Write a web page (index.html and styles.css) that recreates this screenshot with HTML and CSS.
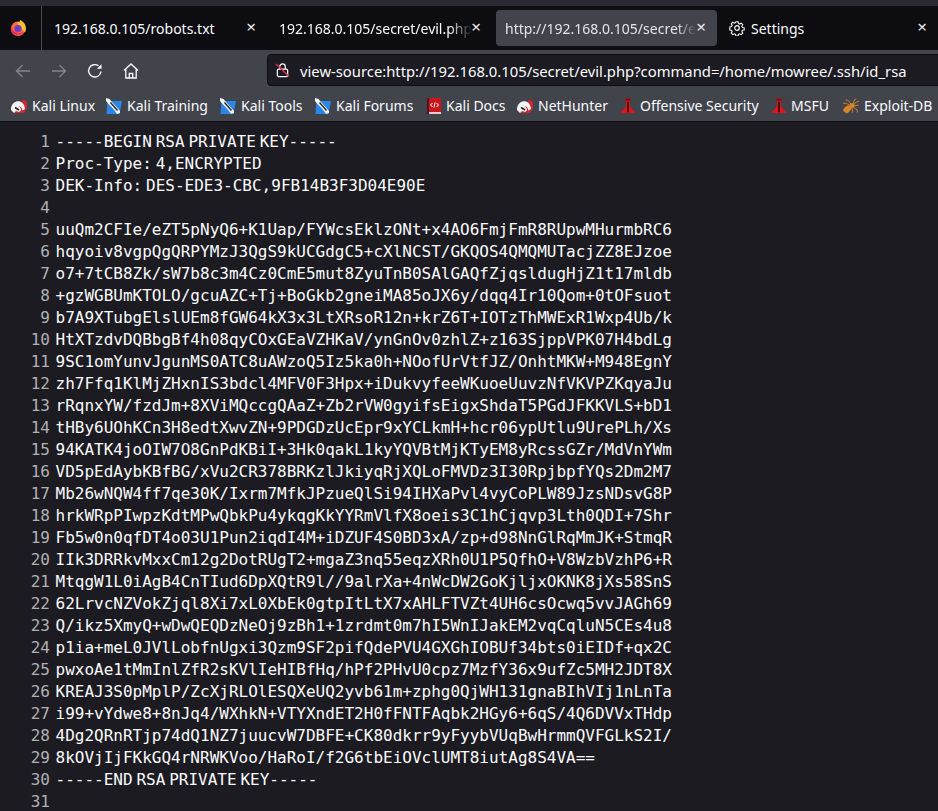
FILE: index.html
```html
<!DOCTYPE html>
<html lang="en">
<head>
<meta charset="utf-8">
<title>view-source</title>
<link rel="stylesheet" href="styles.css">
</head>
<body>
<svg class="defs" width="0" height="0" aria-hidden="true">
  <defs>
    <symbol id="kali-blue" viewBox="0 0 16 16">
      <path d="M1.500 3h14.500L13.500 16H.5z" fill="#2b86ea"/>
      <path d="M0 0l3.500 1 2.500 3 5 5.500 3 3.500v2l-3 1-2-3-3.500-4-3-3L0 3z" fill="#f4f4f4"/>
      <path d="M4.500 4.500l7 8" stroke="#2a2a2a" stroke-width="1.500"/>
    </symbol>
    <symbol id="kali-red" viewBox="0 0 16 16">
      <path d="M1 12L13 1.500l3 2.500v6l-3 5H3z" fill="#cf2530"/>
      <path d="M0 10C1 5 5 2.500 9 3.500c3 .7 5 4.500 5 7.500l-2.500 1.500c-.5-3-2.500-5-5-4.500 2.500 0 3.500 2 3.500 4.500L8 14 5 13l-2 2-3-3z" fill="#f4f4f4"/>
      <path d="M4 9.500l4 2.500" stroke="#222" stroke-width="1.500"/>
    </symbol>
    <symbol id="tower" viewBox="0 0 16 18">
      <path d="M5 0h6v3l-1 1 .5 6L16 15.500V17H0v-1.500L5.500 10 6 4 5 3z" fill="#e0141c"/>
      <path d="M5 0h6v3H5z" fill="#7a1014"/>
      <path d="M7 4h2v12H7z" fill="#3a0c0e"/>
    </symbol>
  </defs>
</svg>
<div class="strip"></div>
<div class="tabs">
  <div class="logo-cell">
    <svg class="fox" viewBox="0 0 16 16" width="16" height="16">
      <circle cx="8" cy="8.800" r="7.200" fill="#ff6a39"/>
      <path d="M7 2.500C10 2 10.500.5 10 0c2.500 1 4 2.500 5 4.500 1.500 3 1 6 0 8L9 6z" fill="#ffc02e"/>
      <circle cx="8" cy="8.500" r="3.600" fill="#6f3ac6"/>
      <path d="M1 5.500c1 6 6 9 12.500 6.500-3 4-10 3.500-12-.5z" fill="#e8256f"/>
    </svg>
  </div>
  <div class="tab tab-first">
    <span class="tab-title">192.168.0.105/robots.txt</span>
    <span class="close">×</span>
  </div>
  <div class="tab tab-second">
    <span class="tab-title fade">192.168.0.105/secret/evil.php</span>
    <span class="close">×</span>
  </div>
  <div class="tab tab-active">
    <span class="tab-title fade">http://192.168.0.105/secret/e</span>
    <span class="close">×</span>
  </div>
  <div class="tab tab-settings">
    <svg class="gear" viewBox="0 0 16 16" width="16" height="16" fill="none" stroke="#fbfbfe" stroke-width="1.200">
      <circle cx="8" cy="8" r="2.300"/>
      <path d="M6.800 1h2.400l.4 2 1.300.6 1.800-1 1.700 1.700-1 1.800.6 1.300 2 .4v2.400l-2 .4-.6 1.300 1 1.800-1.700 1.700-1.800-1-1.300.6-.4 2H6.800l-.4-2-1.300-.6-1.800 1-1.700-1.700 1-1.800-.6-1.300-2-.4V6.800l2-.4.6-1.300-1-1.800 1.700-1.700 1.800 1 1.300-.6z" transform="translate(.8 .8) scale(.9)"/>
    </svg>
    <span class="tab-title">Settings</span>
    <span class="close">×</span>
  </div>
</div>
<nav class="nav">
  <svg class="nav-icon" viewBox="0 0 16 16" width="16" height="16" fill="none" stroke="#85868b" stroke-width="1.300"><path d="M15 8H1.500M7.500 2 1.500 8l6 6"/></svg>
  <svg class="nav-icon" viewBox="0 0 16 16" width="16" height="16" fill="none" stroke="#85868b" stroke-width="1.300"><path d="M1 8h13.500M8.500 2l6 6-6 6"/></svg>
  <svg class="nav-icon" viewBox="0 0 16 16" width="16" height="16" fill="none" stroke="#fbfbfe" stroke-width="1.400"><path d="M14 8.500A6.200 6.200 0 1 1 11.500 2.800"/><path d="M14.500 1.200v4.600H9.900z" fill="#fbfbfe" stroke="none"/></svg>
  <svg class="nav-icon" viewBox="0 0 16 16" width="16" height="16" fill="none" stroke="#fbfbfe" stroke-width="1.300"><path d="M1 7.500 8 1l7 6.500M2.800 6.500V15h10.400V6.500M6.300 15v-4.500h3.400V15"/></svg>
  <div class="urlbar">
    <svg class="lock" viewBox="0 0 16 16" width="15" height="16" fill="none"><path d="M5 7V4.500a3 3 0 0 1 6 0V7" stroke="#fbfbfe" stroke-width="1.300"/><rect x="2.500" y="7" width="11" height="8" rx="1.500" stroke="#fbfbfe" stroke-width="1.300"/><path d="M1 1.500 15 15" stroke="#e22850" stroke-width="1.500"/></svg>
    <span class="url">view-source:http://192.168.0.105/secret/evil.php?command=/home/mowree/.ssh/id_rsa</span>
  </div>
</nav>
<div class="bookmarks">
  <a class="bm bm-1"><svg width="16" height="16"><use href="#kali-red"/></svg>Kali Linux</a>
  <a class="bm bm-2"><svg width="16" height="16"><use href="#kali-blue"/></svg>Kali Training</a>
  <a class="bm bm-3"><svg width="16" height="16"><use href="#kali-blue"/></svg>Kali Tools</a>
  <a class="bm bm-4"><svg width="16" height="16"><use href="#kali-blue"/></svg>Kali Forums</a>
  <a class="bm bm-5"><svg viewBox="0 0 14 16" width="14" height="16"><path d="M1 0h13v14H1z" fill="#c8161c"/><path d="M1 14h13v2H2z" fill="#e8c8c8"/><path d="M0 0h2v16H0z" fill="#4a1420"/><path d="M5.500 5 3.500 7l2 2M9.500 5l2 2-2 2M8.100 4.500 6.900 9.500" stroke="#fff" fill="none"/></svg>Kali Docs</a>
  <a class="bm bm-6"><svg width="16" height="16"><use href="#kali-red"/></svg>NetHunter</a>
  <a class="bm bm-7"><svg viewBox="0 0 16 18" width="14" height="16"><use href="#tower"/></svg>Offensive Security</a>
  <a class="bm bm-8"><svg viewBox="0 0 16 18" width="14" height="16"><use href="#tower"/></svg>MSFU</a>
  <a class="bm bm-9"><svg viewBox="0 0 18 16" width="16" height="16" fill="none" stroke="#d9852a" stroke-width="1"><ellipse cx="5" cy="11.500" rx="4.500" ry="3" fill="#d9852a" transform="rotate(-30 5 11.500)"/><circle cx="10.500" cy="7.500" r="2.300" fill="#d9852a"/><path d="M11 6 13 1l2-1M12 6l4-3h2M12.500 8l5-1M12 9.500l4 3v3M9 6 6 2 3 1M8 7 3 5 0 5M7 14l-3 2M10 10l1 4-1 2"/></svg>Exploit-DB</a>
</div>
<main class="source">
  <div class="row"><span class="num">1</span><span class="line">-----BEGIN RSA PRIVATE KEY-----</span></div>
  <div class="row"><span class="num">2</span><span class="line">Proc-Type: 4,ENCRYPTED</span></div>
  <div class="row"><span class="num">3</span><span class="line">DEK-Info: DES-EDE3-CBC,9FB14B3F3D04E90E</span></div>
  <div class="row"><span class="num">4</span><span class="line"></span></div>
  <div class="row"><span class="num">5</span><span class="line">uuQm2CFIe/eZT5pNyQ6+K1Uap/FYWcsEklzONt+x4AO6FmjFmR8RUpwMHurmbRC6</span></div>
  <div class="row"><span class="num">6</span><span class="line">hqyoiv8vgpQgQRPYMzJ3QgS9kUCGdgC5+cXlNCST/GKQOS4QMQMUTacjZZ8EJzoe</span></div>
  <div class="row"><span class="num">7</span><span class="line">o7+7tCB8Zk/sW7b8c3m4Cz0CmE5mut8ZyuTnB0SAlGAQfZjqsldugHjZ1t17mldb</span></div>
  <div class="row"><span class="num">8</span><span class="line">+gzWGBUmKTOLO/gcuAZC+Tj+BoGkb2gneiMA85oJX6y/dqq4Ir10Qom+0tOFsuot</span></div>
  <div class="row"><span class="num">9</span><span class="line">b7A9XTubgElslUEm8fGW64kX3x3LtXRsoR12n+krZ6T+IOTzThMWExR1Wxp4Ub/k</span></div>
  <div class="row"><span class="num">10</span><span class="line">HtXTzdvDQBbgBf4h08qyCOxGEaVZHKaV/ynGnOv0zhlZ+z163SjppVPK07H4bdLg</span></div>
  <div class="row"><span class="num">11</span><span class="line">9SC1omYunvJgunMS0ATC8uAWzoQ5Iz5ka0h+NOofUrVtfJZ/OnhtMKW+M948EgnY</span></div>
  <div class="row"><span class="num">12</span><span class="line">zh7Ffq1KlMjZHxnIS3bdcl4MFV0F3Hpx+iDukvyfeeWKuoeUuvzNfVKVPZKqyaJu</span></div>
  <div class="row"><span class="num">13</span><span class="line">rRqnxYW/fzdJm+8XViMQccgQAaZ+Zb2rVW0gyifsEigxShdaT5PGdJFKKVLS+bD1</span></div>
  <div class="row"><span class="num">14</span><span class="line">tHBy6UOhKCn3H8edtXwvZN+9PDGDzUcEpr9xYCLkmH+hcr06ypUtlu9UrePLh/Xs</span></div>
  <div class="row"><span class="num">15</span><span class="line">94KATK4joOIW7O8GnPdKBiI+3Hk0qakL1kyYQVBtMjKTyEM8yRcssGZr/MdVnYWm</span></div>
  <div class="row"><span class="num">16</span><span class="line">VD5pEdAybKBfBG/xVu2CR378BRKzlJkiyqRjXQLoFMVDz3I30RpjbpfYQs2Dm2M7</span></div>
  <div class="row"><span class="num">17</span><span class="line">Mb26wNQW4ff7qe30K/Ixrm7MfkJPzueQlSi94IHXaPvl4vyCoPLW89JzsNDsvG8P</span></div>
  <div class="row"><span class="num">18</span><span class="line">hrkWRpPIwpzKdtMPwQbkPu4ykqgKkYYRmVlfX8oeis3C1hCjqvp3Lth0QDI+7Shr</span></div>
  <div class="row"><span class="num">19</span><span class="line">Fb5w0n0qfDT4o03U1Pun2iqdI4M+iDZUF4S0BD3xA/zp+d98NnGlRqMmJK+StmqR</span></div>
  <div class="row"><span class="num">20</span><span class="line">IIk3DRRkvMxxCm12g2DotRUgT2+mgaZ3nq55eqzXRh0U1P5QfhO+V8WzbVzhP6+R</span></div>
  <div class="row"><span class="num">21</span><span class="line">MtqgW1L0iAgB4CnTIud6DpXQtR9l//9alrXa+4nWcDW2GoKjljxOKNK8jXs58SnS</span></div>
  <div class="row"><span class="num">22</span><span class="line">62LrvcNZVokZjql8Xi7xL0XbEk0gtpItLtX7xAHLFTVZt4UH6csOcwq5vvJAGh69</span></div>
  <div class="row"><span class="num">23</span><span class="line">Q/ikz5XmyQ+wDwQEQDzNeOj9zBh1+1zrdmt0m7hI5WnIJakEM2vqCqluN5CEs4u8</span></div>
  <div class="row"><span class="num">24</span><span class="line">p1ia+meL0JVlLobfnUgxi3Qzm9SF2pifQdePVU4GXGhIOBUf34bts0iEIDf+qx2C</span></div>
  <div class="row"><span class="num">25</span><span class="line">pwxoAe1tMmInlZfR2sKVlIeHIBfHq/hPf2PHvU0cpz7MzfY36x9ufZc5MH2JDT8X</span></div>
  <div class="row"><span class="num">26</span><span class="line">KREAJ3S0pMplP/ZcXjRLOlESQXeUQ2yvb61m+zphg0QjWH131gnaBIhVIj1nLnTa</span></div>
  <div class="row"><span class="num">27</span><span class="line">i99+vYdwe8+8nJq4/WXhkN+VTYXndET2H0fFNTFAqbk2HGy6+6qS/4Q6DVVxTHdp</span></div>
  <div class="row"><span class="num">28</span><span class="line">4Dg2QRnRTjp74dQ1NZ7juucvW7DBFE+CK80dkrr9yFyybVUqBwHrmmQVFGLkS2I/</span></div>
  <div class="row"><span class="num">29</span><span class="line">8kOVjIjFKkGQ4rNRWKVoo/HaRoI/f2G6tbEiOVclUMT8iutAg8S4VA==</span></div>
  <div class="row"><span class="num">30</span><span class="line">-----END RSA PRIVATE KEY-----</span></div>
  <div class="row"><span class="num">31</span><span class="line"></span></div>
</main>
</body>
</html>
```
FILE: styles.css
```css
* { box-sizing: border-box; }
html, body { margin: 0; padding: 0; height: 100%; overflow: hidden; }
body {
  background: #1c1b22;
  color: #fbfbfe;
  font-family: "Noto Sans", sans-serif;
  font-size: 14px;
}
.defs { display: block; height: 0; }
.strip { height: 6px; background: #2b2a33; }
.tabs {
  height: 44px;
  display: flex;
  align-items: center;
  background: #0c0c11;
}
.logo-cell {
  width: 42px;
  height: 44px;
  flex: none;
  display: flex;
  align-items: center;
  padding-left: 10px;
  border-right: 1px solid #4a4a52;
}
.tab {
  flex: none;
  height: 36px;
  display: flex;
  align-items: center;
  position: relative;
  overflow: hidden;
}
.tab-first { width: 225px; padding-left: 12px; }
.tab-second { width: 229px; padding-left: 12px; }
.tab-active {
  width: 221px;
  padding-left: 9px;
  background: #42444c;
  border-radius: 4px;
  color: #e4e4e8;
}
.tab-settings { flex: 1; padding-left: 12px; gap: 6px; }
.tab-title { white-space: nowrap; }
.tab-second .fade {
  -webkit-mask-image: linear-gradient(to right, #000 88%, transparent 100%);
  mask-image: linear-gradient(to right, #000 88%, transparent 100%);
}
.tab-active .fade {
  -webkit-mask-image: linear-gradient(to right, #000 90%, transparent 100%);
  mask-image: linear-gradient(to right, #000 90%, transparent 100%);
}
.close {
  position: absolute;
  right: 10px;
  top: 6px;
  font-size: 17px;
  line-height: 22px;
  width: 12px;
  text-align: center;
  color: #e8e8ec;
}
.tab-second .close { right: 14px; }
.nav {
  height: 40px;
  display: flex;
  align-items: center;
  background: #42444c;
  padding-left: 15px;
  gap: 20px;
}
.nav-icon { flex: none; margin-top: 2px; }
.urlbar {
  flex: 1;
  margin-left: 108px;
  margin-right: -20px;
  height: 32px;
  display: flex;
  align-items: center;
  gap: 10px;
  background: #1c1b22;
  border: 1px solid #0c0c11;
  border-radius: 4px;
  padding-left: 7px;
  white-space: nowrap;
  font-size: 14.8px;
}
.url { padding-top: 1px; }
.lock { flex: none; }
.bookmarks {
  height: 32px;
  display: flex;
  align-items: center;
  background: #42444c;
  border-bottom: 1px solid #0c0c11;
  overflow: hidden;
  white-space: nowrap;
  padding-left: 11px;
}
.bm { display: flex; align-items: center; gap: 5px; flex: none; }
.bm-1 { width: 95px; }
.bm-2 { width: 114px; }
.bm-3 { width: 95px; }
.bm-4 { width: 112px; }
.bm-5 { width: 90px; }
.bm-6 { width: 104px; }
.bm-7 { width: 151px; }
.bm-8 { width: 71px; }
.source {
  padding-top: 9px;
  font-family: "DejaVu Sans Mono", monospace;
  font-size: 16px;
  line-height: 22px;
}
.row { display: flex; height: 22px; }
.num {
  width: 50px;
  text-align: right;
  color: #b1b1b3;
  flex: none;
}
.line {
  margin-left: 5.5px;
  white-space: pre;
  word-spacing: -5.8px;
  color: #fbfbfe;
}
```
